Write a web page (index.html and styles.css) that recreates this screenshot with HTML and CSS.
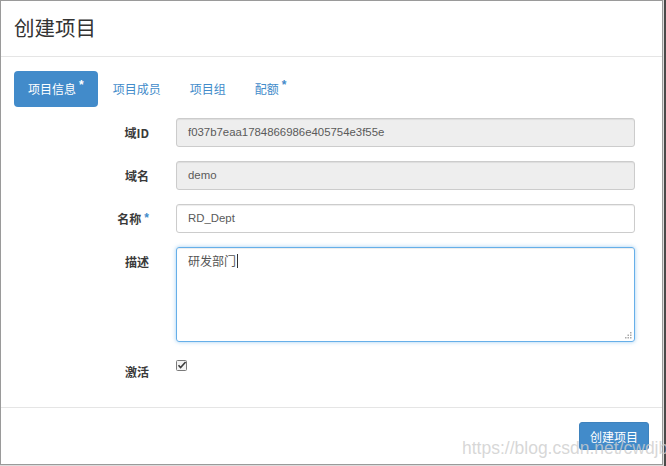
FILE: index.html
```html
<!DOCTYPE html>
<html lang="zh">
<head>
<meta charset="utf-8">
<title>创建项目</title>
<link rel="stylesheet" href="styles.css">
</head>
<body>
<div class="modal">
  <div class="modal-header">
    <h3 class="modal-title">创建项目</h3>
  </div>
  <div class="modal-body">
    <ul class="nav-tabs">
      <li class="tab active">项目信息<span class="req">*</span></li>
      <li class="tab">项目成员</li>
      <li class="tab">项目组</li>
      <li class="tab">配额<span class="req">*</span></li>
    </ul>
    <form class="form">
      <div class="row">
        <label class="lbl">域ID</label>
        <div class="input disabled">f037b7eaa1784866986e405754e3f55e</div>
      </div>
      <div class="row">
        <label class="lbl">域名</label>
        <div class="input disabled">demo</div>
      </div>
      <div class="row">
        <label class="lbl">名称<span class="req">*</span></label>
        <div class="input">RD_Dept</div>
      </div>
      <div class="row">
        <label class="lbl">描述</label>
        <div class="textarea">研发部门<span class="caret"></span>
          <svg class="grip" width="7" height="7" viewBox="0 0 7 7"><g fill="#aaa"><rect x="5" y="0" width="1.5" height="1.5"/><rect x="2.5" y="2.5" width="1.5" height="1.5"/><rect x="5" y="2.5" width="1.5" height="1.5"/><rect x="0" y="5" width="1.5" height="1.5"/><rect x="2.5" y="5" width="1.5" height="1.5"/><rect x="5" y="5" width="1.5" height="1.5"/></g></svg>
        </div>
      </div>
      <div class="row row-check">
        <label class="lbl">激活</label>
        <div class="check">
          <svg width="11" height="11" viewBox="0 0 11 11"><rect x="0.5" y="0.5" width="10" height="10" rx="1" fill="#f3f3f3" stroke="#7a7a7a"/><path d="M2.5 5.2 L4.6 7.6 L9.6 2" fill="none" stroke="#3d3d3d" stroke-width="1.6"/></svg>
        </div>
      </div>
    </form>
  </div>
  <div class="modal-footer">
    <button class="btn" type="button">创建项目</button>
  </div>
  <div class="watermark">https://blog.csdn.net/cwdjbz</div>
</div>
</body>
</html>
```
FILE: styles.css
```css
* { box-sizing: border-box; }
html, body { margin: 0; padding: 0; }
body {
  width: 666px;
  height: 466px;
  background: linear-gradient(to right, #dcdcdc 664px, #4a4a4a 664px);
  font-family: "Noto Sans CJK SC", "Liberation Sans", sans-serif;
  color: #333;
  overflow: hidden;
}
.modal {
  position: relative;
  width: 663px;
  height: 465px;
  background: #fff;
  border: 1px solid #9a9a9a;
  display: flex;
  flex-direction: column;
}
.modal-header {
  height: 56px;
  border-bottom: 1px solid #e5e5e5;
  display: flex;
  align-items: center;
  padding-left: 13px;
}
.modal-title {
  margin: 0;
  font-size: 20.5px;
  font-weight: normal;
  color: #333;
  line-height: 1;
  position: relative;
  top: -1px;
}
.modal-body {
  flex: 1;
  padding: 14px 13px 0 13px;
}
.nav-tabs {
  list-style: none;
  margin: 0;
  padding: 0;
  display: flex;
  gap: 1px;
}
.tab {
  height: 36px;
  line-height: 36px;
  padding: 0 14px;
  font-size: 12px;
  color: #428bca;
  border-radius: 4px;
}
.tab.active {
  background: #428bca;
  color: #fff;
}
.req {
  font-family: "Liberation Sans", sans-serif;
  font-size: 12px;
  font-weight: bold;
  color: #428bca;
  vertical-align: top;
  line-height: 1;
  margin-left: 4px;
  position: relative;
  top: -4px;
}
.tab .req { top: 8px; margin-left: 3px; }
.tab.active .req { color: #fff; }
.form {
  margin-top: 11px;
  display: flex;
  flex-direction: column;
  gap: 14px;
}
.row {
  display: grid;
  grid-template-columns: 135px 459px;
  column-gap: 27px;
  align-items: start;
}
.lbl {
  text-align: right;
  font-size: 12px;
  font-weight: bold;
  color: #3a3a3a;
  line-height: 17px;
  padding-top: 6px;
}
.lbl .req { top: 2px; margin-left: 3px; }
.input {
  height: 29px;
  border: 1px solid #ccc;
  border-radius: 3px;
  padding: 0 11px;
  font-family: "Liberation Sans", sans-serif;
  font-size: 11.4px;
  line-height: 27px;
  color: #5a5a5a;
  background: #fff;
  box-shadow: inset 0 1px 1px rgba(0,0,0,.075);
}
.input.disabled { background: #eee; }
.textarea {
  position: relative;
  height: 95px;
  border: 1px solid #66afe9;
  border-radius: 3px;
  padding: 4px 11px;
  font-size: 12px;
  line-height: 18px;
  color: #555;
  box-shadow: inset 0 1px 1px rgba(0,0,0,.075), 0 0 4px rgba(102,175,233,.6);
}
.caret {
  display: inline-block;
  width: 1px;
  height: 14px;
  background: #333;
  vertical-align: -2px;
  margin-left: 1px;
}
.grip {
  position: absolute;
  right: 2px;
  bottom: 2px;
}
.row-check .lbl { padding-top: 7px; }
.check { padding-top: 4px; height: 20px; }
.check svg { display: block; }
.modal-footer {
  height: 57px;
  border-top: 1px solid #e5e5e5;
  padding: 14px 13px 0 0;
  display: flex;
  justify-content: flex-end;
  align-items: flex-start;
}
.btn {
  height: 28px;
  width: 70px;
  padding: 0;
  border: 1px solid #3e82bd;
  border-radius: 3px;
  background: #428bca;
  color: #fff;
  font-family: "Noto Sans CJK SC", sans-serif;
  font-size: 12px;
}
.watermark {
  position: absolute;
  left: 461px;
  top: 437px;
  font-family: "Liberation Sans", sans-serif;
  font-size: 17.5px;
  color: rgba(205,205,205,0.8);
  white-space: nowrap;
}
```
